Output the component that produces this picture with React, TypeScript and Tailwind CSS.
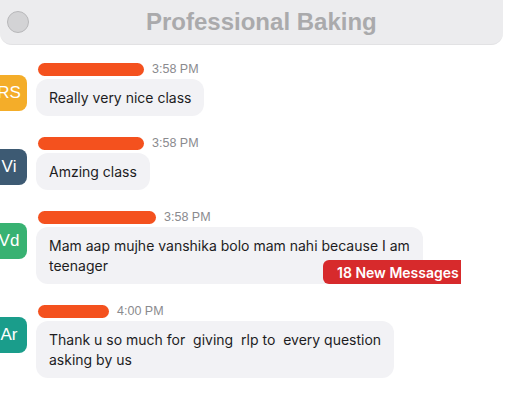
import React from 'react';

interface Message {
  initials: string;
  avatarColor: string;
  nameWidth: string;
  time: string;
  lines: string[];
}

const messages: Message[] = [
  {
    initials: 'RS',
    avatarColor: 'bg-[#f4ad29]',
    nameWidth: 'w-[106px]',
    time: '3:58 PM',
    lines: ['Really very nice class'],
  },
  {
    initials: 'Vi',
    avatarColor: 'bg-[#3d5a73]',
    nameWidth: 'w-[106px]',
    time: '3:58 PM',
    lines: ['Amzing class'],
  },
  {
    initials: 'Vd',
    avatarColor: 'bg-[#38b272]',
    nameWidth: 'w-[118px]',
    time: '3:58 PM',
    lines: ['Mam aap mujhe vanshika bolo mam nahi because I am', 'teenager'],
  },
  {
    initials: 'Ar',
    avatarColor: 'bg-[#1a9d8b]',
    nameWidth: 'w-[71px]',
    time: '4:00 PM',
    lines: ['Thank u so much for  giving  rlp to  every question', 'asking by us'],
  },
];

const ChatRow: React.FC<{ msg: Message }> = ({ msg }) => (
  <div className="flex items-start">
    <div
      className={`ml-[-9px] mt-[13px] flex h-9 w-9 shrink-0 items-center justify-center rounded-lg text-[17px] text-white ${msg.avatarColor}`}
    >
      {msg.initials}
    </div>
    <div className="ml-[9px] flex flex-col">
      <div className="flex h-[14px] items-center pl-[2px]">
        <div className={`h-[13px] rounded-full bg-[#f4511e] ${msg.nameWidth}`} />
        <span className="ml-[8px] text-[12.5px] leading-none text-[#8a8a8e]">{msg.time}</span>
      </div>
      <div className="mt-[3px] w-fit whitespace-pre rounded-xl bg-[#f2f2f5] px-[13px] py-[8.5px] font-['Inter',sans-serif] text-[14px] leading-5 text-[#1d1d1f]">
        {msg.lines.map((line, i) => (
          <div key={i}>{line}</div>
        ))}
      </div>
    </div>
  </div>
);

export default function App() {
  return (
    <div
      className="relative h-[404px] w-[505px] overflow-hidden bg-white"
      style={{ fontFamily: '"Liberation Sans", Arial, sans-serif' }}
    >
      <div className="flex h-[45px] w-[503px] items-center rounded-b-xl border-b border-[#e2e2e4] bg-[#ececee] pl-[7px]">
        <div className="h-[22px] w-[22px] rounded-full border border-[#b8b8ba] bg-[#d3d3d5]" />
        <span className="ml-[117px] text-[24px] font-bold text-[#aaaaac]">Professional Baking</span>
      </div>

      <div className="mt-[17px] flex flex-col gap-5">
        {messages.map((m, i) => (
          <ChatRow key={i} msg={m} />
        ))}
      </div>

      <div className="absolute left-[323px] top-[260px] flex h-6 w-[138px] items-center rounded-l-md bg-[#d72a2c] pl-[14px] font-['Inter',sans-serif] text-[14px] font-semibold text-white">
        18 New Messages
      </div>
    </div>
  );
}
